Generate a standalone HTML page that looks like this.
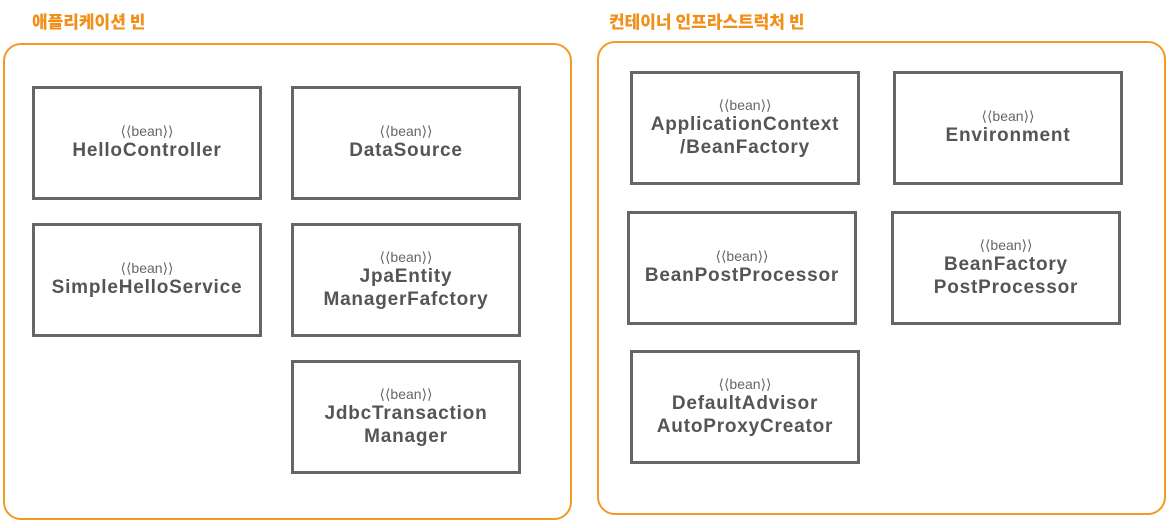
<!DOCTYPE html>
<html><head><meta charset="utf-8"><style>
body{margin:0;width:1172px;height:528px;background:#fff;position:relative;overflow:hidden;font-family:"Liberation Sans","Noto Sans CJK KR",sans-serif}
.t{position:absolute;color:#f0901a;font-weight:900;font-size:17px;font-family:"Noto Sans CJK KR",sans-serif;line-height:1}
.c{position:absolute;border:2.5px solid #f39a22;border-radius:18px;box-sizing:border-box}
.b{position:absolute;width:230px;height:114px;border:3px solid #666;box-sizing:border-box;display:flex;flex-direction:column;align-items:center;justify-content:center;color:#555;text-align:center}
.b small{font-size:14px;line-height:15px;color:#666}
.b span{font-size:19px;font-weight:bold;line-height:23px;letter-spacing:0.8px}
</style></head><body>
<div class="t" style="left:32px;top:12px">애플리케이션 빈</div>
<div class="t" style="left:609px;top:12px">컨테이너 인프라스트럭처 빈</div>
<div class="c" style="left:3px;top:43px;width:569px;height:477px"></div>
<div class="c" style="left:597px;top:41px;width:569px;height:474px"></div>

<div class="b" style="left:32px;top:86px"><small>⟨⟨bean⟩⟩</small><span>HelloController</span></div>
<div class="b" style="left:291px;top:86px"><small>⟨⟨bean⟩⟩</small><span>DataSource</span></div>
<div class="b" style="left:32px;top:223px"><small>⟨⟨bean⟩⟩</small><span>SimpleHelloService</span></div>
<div class="b" style="left:291px;top:223px"><small>⟨⟨bean⟩⟩</small><span>JpaEntity<br>ManagerFafctory</span></div>
<div class="b" style="left:291px;top:360px"><small>⟨⟨bean⟩⟩</small><span>JdbcTransaction<br>Manager</span></div>

<div class="b" style="left:630px;top:71px"><small>⟨⟨bean⟩⟩</small><span>ApplicationContext<br>/BeanFactory</span></div>
<div class="b" style="left:893px;top:71px"><small>⟨⟨bean⟩⟩</small><span>Environment</span></div>
<div class="b" style="left:627px;top:211px"><small>⟨⟨bean⟩⟩</small><span>BeanPostProcessor</span></div>
<div class="b" style="left:891px;top:211px"><small>⟨⟨bean⟩⟩</small><span>BeanFactory<br>PostProcessor</span></div>
<div class="b" style="left:630px;top:350px"><small>⟨⟨bean⟩⟩</small><span>DefaultAdvisor<br>AutoProxyCreator</span></div>
</body></html>
